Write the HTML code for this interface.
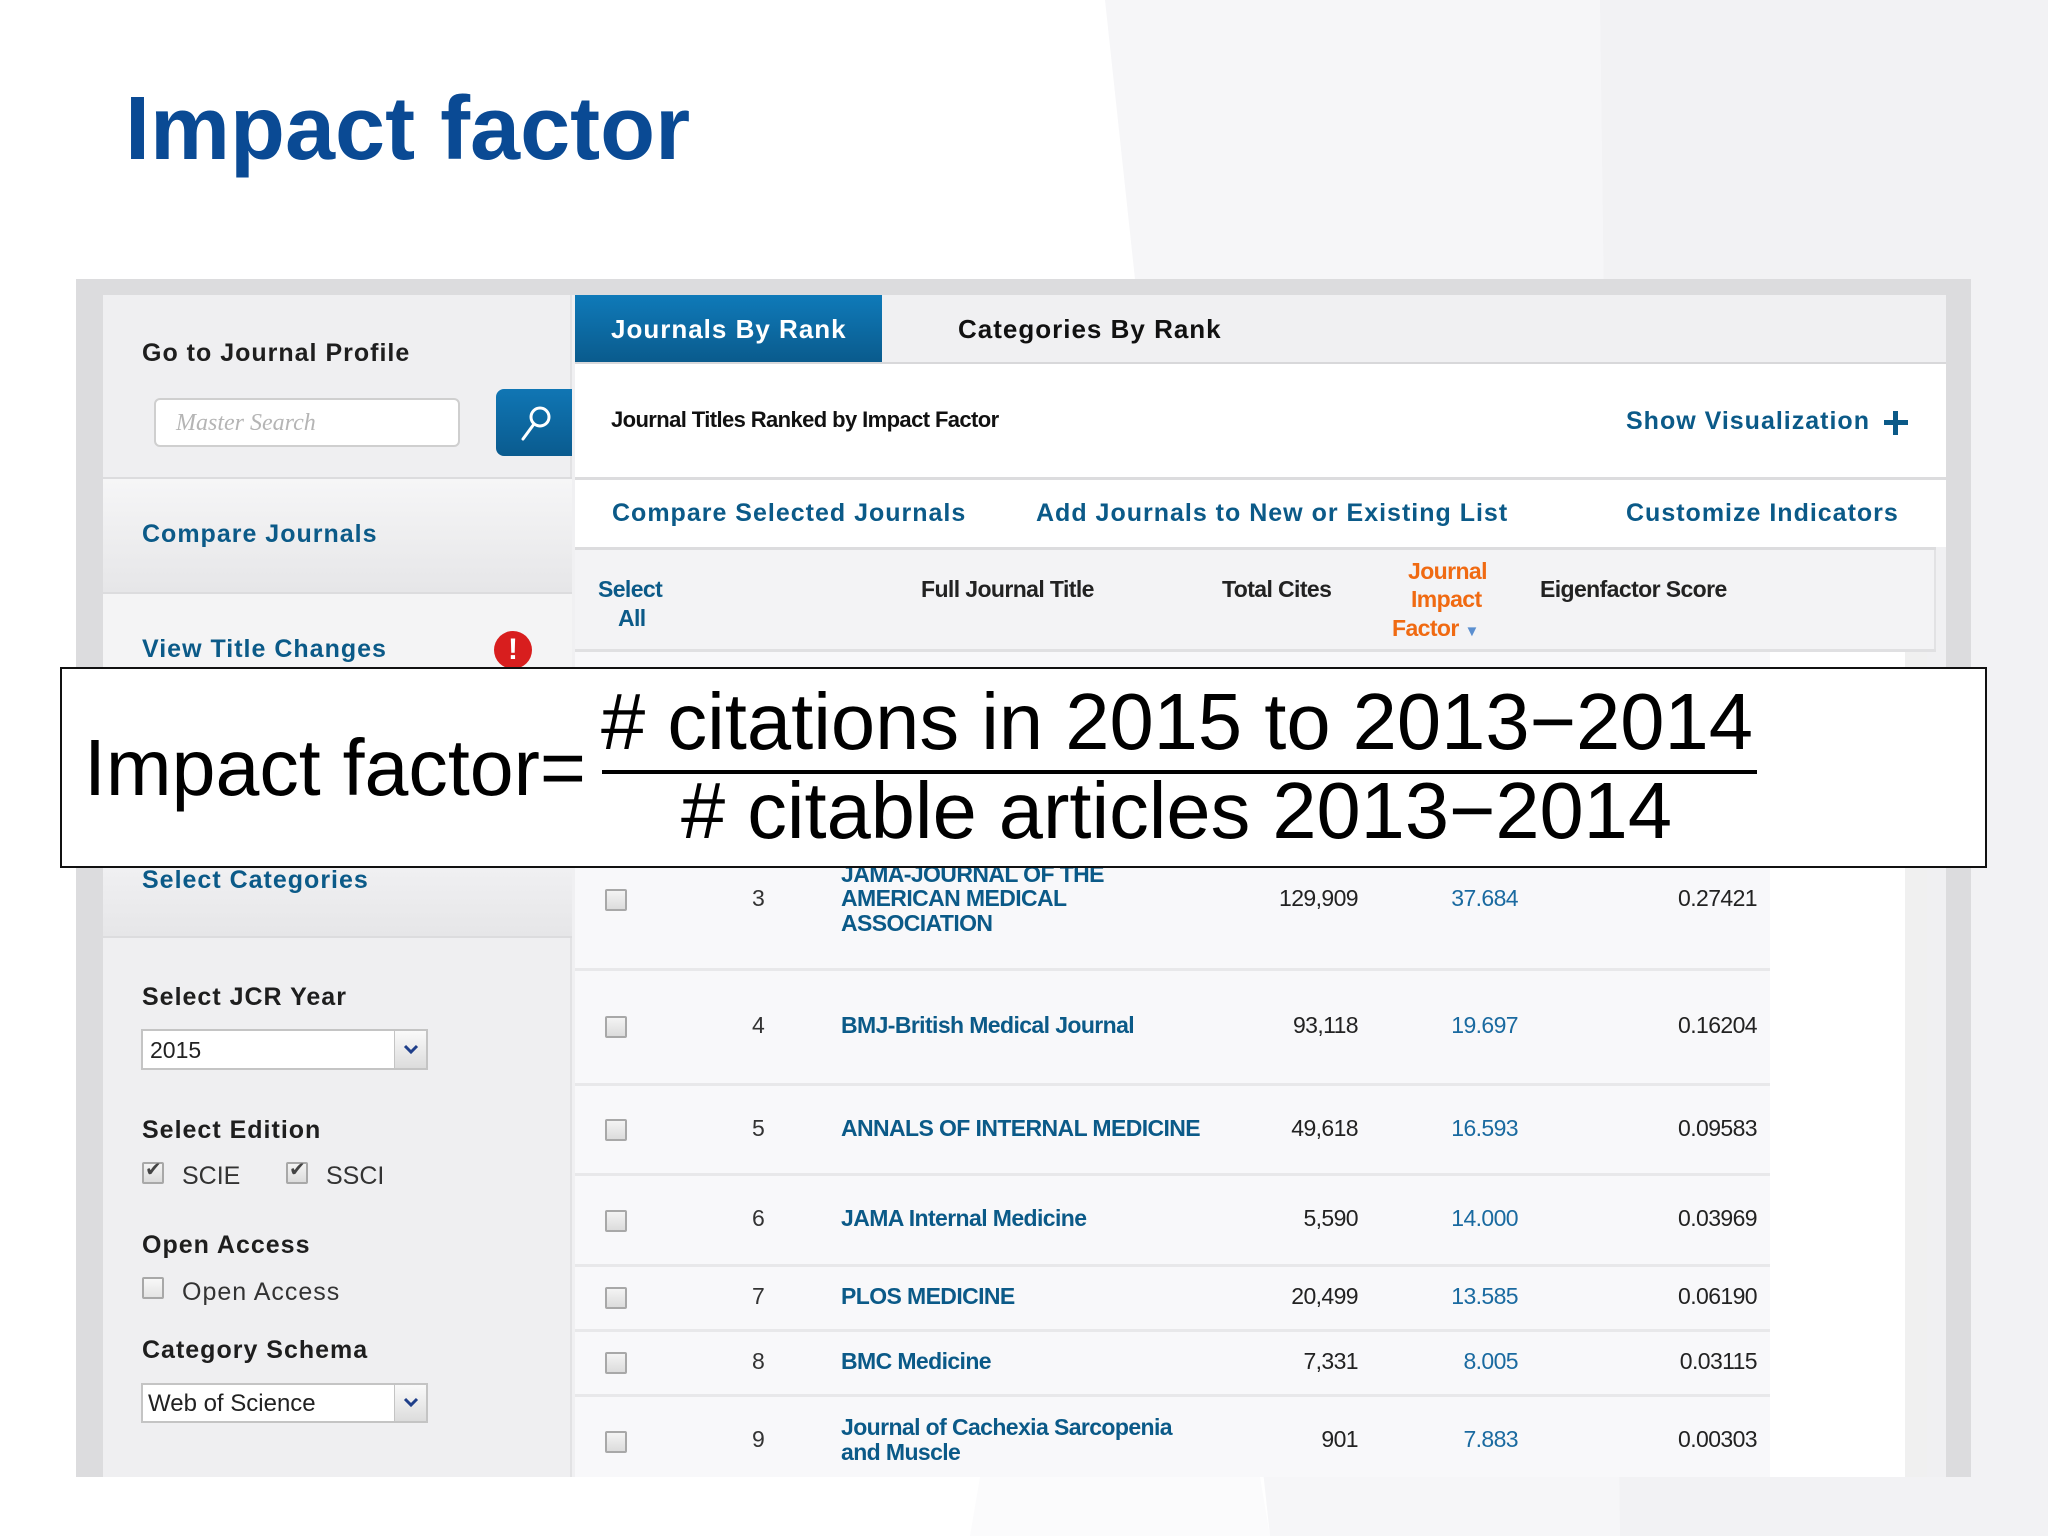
<!DOCTYPE html>
<html><head><meta charset="utf-8"><style>
*{margin:0;padding:0;box-sizing:border-box}
body{width:2048px;height:1536px;position:relative;overflow:hidden;background:#fff;font-family:"Liberation Sans",sans-serif}
.t{position:absolute;white-space:nowrap;line-height:1}
.b{font-weight:bold}
.sb{font-weight:bold;font-size:25px;letter-spacing:1px;color:#1e1e1e}
.lk{color:#0b5a88;font-weight:bold;font-size:25px;letter-spacing:1px}
.tb{font-size:23px;letter-spacing:-0.6px}
.ti{color:#0b5a88;font-weight:bold}
.num{color:#222;text-align:right}
.jif{color:#1a6aa0;text-align:right}
.cb{position:absolute;width:22px;height:22px;border:2px solid #a8a8a8;background:linear-gradient(#f4f4f4,#dcdcdc);border-radius:2px}
.hl{position:absolute;height:3px;background:#e8e8ea}
.dd{position:absolute;width:32px;background:linear-gradient(#fafafa,#dcdcdc);border-left:1px solid #c4c4c4}
</style></head><body>
<svg style="position:absolute;left:0;top:0" width="2048" height="1536">
<polygon points="1105,0 2048,0 2048,1536 1270,1536" fill="#f6f6f8"/>
<polygon points="1600,0 2048,0 2048,1536 1620,1536" fill="#f2f2f4"/>
<polygon points="1120,650 1270,1536 970,1536" fill="#fbfbfc"/>
</svg>
<div class="t b" style="left:125px;top:84px;font-size:90px;color:#0a4a94">Impact factor</div>

<div style="position:absolute;left:76px;top:279px;width:1895px;height:1198px;background:#dcdcde"></div>
<div style="position:absolute;left:103px;top:295px;width:1843px;height:1182px;background:#f0f0f2"></div>
<div style="position:absolute;left:103px;top:295px;width:469px;height:1182px;background:#efeff1;border-right:2px solid #e2e2e4"></div>
<div style="position:absolute;left:103px;top:477px;width:469px;height:115px;background:linear-gradient(#f6f6f7,#e6e6e8);border-top:2px solid #dcdcde"></div>
<div style="position:absolute;left:103px;top:592px;width:469px;height:80px;background:#f4f4f5;border-top:2px solid #dcdcde"></div>
<div style="position:absolute;left:103px;top:868px;width:469px;height:68px;background:linear-gradient(#f0f0f2,#e6e6e8)"></div>
<div style="position:absolute;left:103px;top:936px;width:469px;height:2px;background:#dcdcde"></div>
<div class="t sb" style="left:142px;top:341px">Go to Journal Profile</div>
<div style="position:absolute;left:154px;top:398px;width:306px;height:49px;background:#fff;border:2px solid #cfcfcf;border-radius:6px"></div>
<div class="t" style="left:176px;top:411px;font-size:24px;font-style:italic;color:#b5b5b5;font-family:'Liberation Serif',serif">Master Search</div>
<div style="position:absolute;left:496px;top:389px;width:76px;height:67px;background:linear-gradient(#1076b4,#0a5b8f);border-radius:8px 0 0 8px"></div>
<svg style="position:absolute;left:512px;top:400px" width="46" height="46"><circle cx="28" cy="17" r="9" fill="none" stroke="#fff" stroke-width="3"/><line x1="22" y1="24" x2="11" y2="39" stroke="#fff" stroke-width="3" stroke-linecap="round"/></svg>
<div class="t lk" style="left:142px;top:522px">Compare Journals</div>
<div class="t lk" style="left:142px;top:637px">View Title Changes</div>
<div style="position:absolute;left:494px;top:631px;width:38px;height:38px;border-radius:50%;background:#d81e1e;color:#fff;font-weight:bold;font-size:30px;text-align:center;line-height:38px">!</div>
<div class="t lk" style="left:142px;top:868px">Select Categories</div>
<div class="t sb" style="left:142px;top:985px">Select JCR Year</div>
<div style="position:absolute;left:141px;top:1029px;width:287px;height:41px;background:#fff;border:2px solid #c4c4c4"></div>
<div class="dd" style="left:394px;top:1031px;height:37px"><svg width="32" height="37"><polyline points="10,15 16,21 22,15" fill="none" stroke="#1f3f8a" stroke-width="3"/></svg></div>
<div class="t" style="left:150px;top:1039px;font-size:23px;color:#222">2015</div>
<div class="t sb" style="left:142px;top:1118px">Select Edition</div>
<div class="cb" style="left:142px;top:1162px"></div><div class="t" style="left:145px;top:1160px;font-size:20px;color:#444">&#10004;</div>
<div class="t" style="left:182px;top:1164px;font-size:25px;color:#333">SCIE</div>
<div class="cb" style="left:286px;top:1162px"></div><div class="t" style="left:289px;top:1160px;font-size:20px;color:#444">&#10004;</div>
<div class="t" style="left:326px;top:1164px;font-size:25px;color:#333">SSCI</div>
<div class="t sb" style="left:142px;top:1233px">Open Access</div>
<div class="cb" style="left:142px;top:1277px;background:linear-gradient(#f8f8f8,#e4e4e4)"></div>
<div class="t" style="left:182px;top:1280px;font-size:25px;color:#333;letter-spacing:1px">Open Access</div>
<div class="t sb" style="left:142px;top:1338px">Category Schema</div>
<div style="position:absolute;left:141px;top:1383px;width:287px;height:40px;background:#fff;border:2px solid #c4c4c4"></div>
<div class="dd" style="left:394px;top:1385px;height:36px"><svg width="32" height="36"><polyline points="10,14 16,20 22,14" fill="none" stroke="#1f3f8a" stroke-width="3"/></svg></div>
<div class="t" style="left:148px;top:1392px;font-size:24px;color:#222">Web of Science</div>

<div style="position:absolute;left:575px;top:295px;width:307px;height:67px;background:linear-gradient(#0f7ab9,#0a5b8d)"></div>
<div class="t b" style="left:611px;top:316px;font-size:26px;color:#fff;letter-spacing:1px">Journals By Rank</div>
<div class="t b" style="left:958px;top:316px;font-size:26px;color:#111;letter-spacing:1px">Categories By Rank</div>
<div style="position:absolute;left:575px;top:362px;width:1371px;height:2px;background:#d8d8da"></div>
<div style="position:absolute;left:575px;top:364px;width:1371px;height:113px;background:#fff"></div>
<div class="t b" style="left:611px;top:409px;font-size:22px;color:#111;letter-spacing:-0.6px">Journal Titles Ranked by Impact Factor</div>
<div class="t lk" style="left:1626px;top:409px">Show Visualization</div>
<svg style="position:absolute;left:1883px;top:410px" width="26" height="26"><rect x="10" y="1" width="5" height="24" fill="#0b5a88"/><rect x="1" y="10" width="24" height="5" fill="#0b5a88"/></svg>
<div style="position:absolute;left:575px;top:477px;width:1371px;height:3px;background:#dcdcde"></div>
<div style="position:absolute;left:575px;top:480px;width:1371px;height:67px;background:#fff"></div>
<div class="t lk" style="left:612px;top:501px">Compare Selected Journals</div>
<div class="t lk" style="left:1036px;top:501px">Add Journals to New or Existing List</div>
<div class="t lk" style="left:1626px;top:501px">Customize Indicators</div>
<div style="position:absolute;left:575px;top:547px;width:1361px;height:3px;background:#dcdcde"></div>
<div style="position:absolute;left:575px;top:550px;width:1361px;height:99px;background:#f3f3f5;border-right:2px solid #e2e2e4"></div>
<div class="t tb b" style="left:598px;top:578px;color:#0b5a88">Select</div>
<div class="t tb b" style="left:618px;top:607px;color:#0b5a88">All</div>
<div class="t tb b" style="left:921px;top:578px;color:#222">Full Journal Title</div>
<div class="t tb b" style="left:1222px;top:578px;color:#222">Total Cites</div>
<div class="t tb b" style="left:1408px;top:560px;color:#f06a12">Journal</div>
<div class="t tb b" style="left:1411px;top:588px;color:#f06a12">Impact</div>
<div class="t tb b" style="left:1392px;top:617px;color:#f06a12">Factor <span style="color:#5b8fd0;font-size:15px">&#9660;</span></div>
<div class="t tb b" style="left:1540px;top:578px;color:#222">Eigenfactor Score</div>
<div style="position:absolute;left:575px;top:649px;width:1361px;height:3px;background:#e0e0e2"></div>

<div style="position:absolute;left:575px;top:652px;width:1195px;height:825px;background:#f8f8fa"></div>
<div style="position:absolute;left:1770px;top:652px;width:135px;height:825px;background:#fff"></div>
<div style="position:absolute;left:1905px;top:652px;width:22px;height:825px;background:#f0f0f0"></div>
<div class="hl" style="left:575px;top:968px;width:1195px"></div>
<div class="hl" style="left:575px;top:1083px;width:1195px"></div>
<div class="hl" style="left:575px;top:1173px;width:1195px"></div>
<div class="hl" style="left:575px;top:1264px;width:1195px"></div>
<div class="hl" style="left:575px;top:1329px;width:1195px"></div>
<div class="hl" style="left:575px;top:1394px;width:1195px"></div>

<div class="cb" style="left:605px;top:889px"></div>
<div class="t tb" style="left:752px;top:887px;color:#333">3</div>
<div class="t tb ti" style="left:841px;top:863px">JAMA-JOURNAL OF THE</div>
<div class="t tb ti" style="left:841px;top:887px">AMERICAN MEDICAL</div>
<div class="t tb ti" style="left:841px;top:912px">ASSOCIATION</div>
<div class="t tb num" style="left:1208px;width:150px;top:887px">129,909</div>
<div class="t tb jif" style="left:1368px;width:150px;top:887px">37.684</div>
<div class="t tb num" style="left:1607px;width:150px;top:887px">0.27421</div>

<div class="cb" style="left:605px;top:1016px"></div>
<div class="t tb" style="left:752px;top:1014px;color:#333">4</div>
<div class="t tb ti" style="left:841px;top:1014px">BMJ-British Medical Journal</div>
<div class="t tb num" style="left:1208px;width:150px;top:1014px">93,118</div>
<div class="t tb jif" style="left:1368px;width:150px;top:1014px">19.697</div>
<div class="t tb num" style="left:1607px;width:150px;top:1014px">0.16204</div>

<div class="cb" style="left:605px;top:1119px"></div>
<div class="t tb" style="left:752px;top:1117px;color:#333">5</div>
<div class="t tb ti" style="left:841px;top:1117px">ANNALS OF INTERNAL MEDICINE</div>
<div class="t tb num" style="left:1208px;width:150px;top:1117px">49,618</div>
<div class="t tb jif" style="left:1368px;width:150px;top:1117px">16.593</div>
<div class="t tb num" style="left:1607px;width:150px;top:1117px">0.09583</div>

<div class="cb" style="left:605px;top:1210px"></div>
<div class="t tb" style="left:752px;top:1207px;color:#333">6</div>
<div class="t tb ti" style="left:841px;top:1207px">JAMA Internal Medicine</div>
<div class="t tb num" style="left:1208px;width:150px;top:1207px">5,590</div>
<div class="t tb jif" style="left:1368px;width:150px;top:1207px">14.000</div>
<div class="t tb num" style="left:1607px;width:150px;top:1207px">0.03969</div>

<div class="cb" style="left:605px;top:1287px"></div>
<div class="t tb" style="left:752px;top:1285px;color:#333">7</div>
<div class="t tb ti" style="left:841px;top:1285px">PLOS MEDICINE</div>
<div class="t tb num" style="left:1208px;width:150px;top:1285px">20,499</div>
<div class="t tb jif" style="left:1368px;width:150px;top:1285px">13.585</div>
<div class="t tb num" style="left:1607px;width:150px;top:1285px">0.06190</div>

<div class="cb" style="left:605px;top:1352px"></div>
<div class="t tb" style="left:752px;top:1350px;color:#333">8</div>
<div class="t tb ti" style="left:841px;top:1350px">BMC Medicine</div>
<div class="t tb num" style="left:1208px;width:150px;top:1350px">7,331</div>
<div class="t tb jif" style="left:1368px;width:150px;top:1350px">8.005</div>
<div class="t tb num" style="left:1607px;width:150px;top:1350px">0.03115</div>

<div class="cb" style="left:605px;top:1431px"></div>
<div class="t tb" style="left:752px;top:1428px;color:#333">9</div>
<div class="t tb ti" style="left:841px;top:1416px">Journal of Cachexia Sarcopenia</div>
<div class="t tb ti" style="left:841px;top:1441px">and Muscle</div>
<div class="t tb num" style="left:1208px;width:150px;top:1428px">901</div>
<div class="t tb jif" style="left:1368px;width:150px;top:1428px">7.883</div>
<div class="t tb num" style="left:1607px;width:150px;top:1428px">0.00303</div>

<div style="position:absolute;left:60px;top:667px;width:1927px;height:201px;background:#fff;border:2px solid #111"></div>
<svg style="position:absolute;left:0;top:0" width="2048" height="1536">
<text x="84" y="795" font-family="Liberation Sans" font-size="80" fill="#000" textLength="502" lengthAdjust="spacingAndGlyphs">Impact factor=</text>
<text x="601" y="749" font-family="Liberation Sans" font-size="80" fill="#000" textLength="1152" lengthAdjust="spacingAndGlyphs"># citations in 2015 to 2013−2014</text>
<rect x="602" y="770" width="1155" height="4" fill="#000"/>
<text x="681" y="838" font-family="Liberation Sans" font-size="80" fill="#000" textLength="991" lengthAdjust="spacingAndGlyphs"># citable articles 2013−2014</text>
</svg>
</body></html>
